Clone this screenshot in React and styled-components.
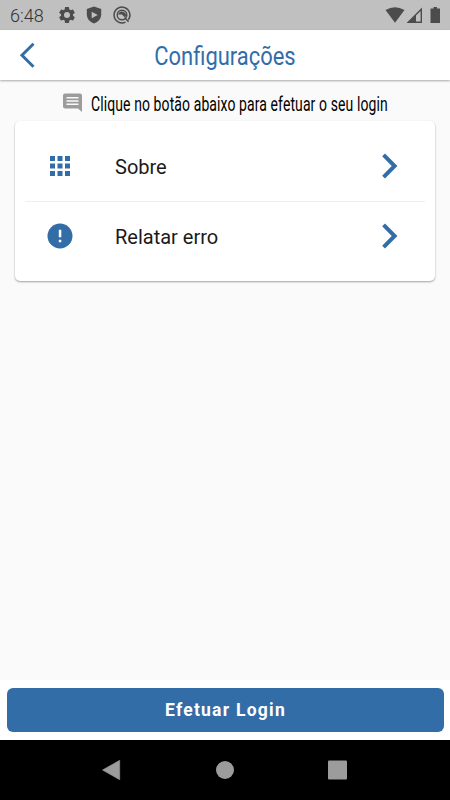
import React from 'react';
import styled, { createGlobalStyle } from 'styled-components';

const blue = '#336da8';

const GlobalStyle = createGlobalStyle`
  * { box-sizing: border-box; }
  body { margin: 0; background: #fafafa; font-family: Roboto, "Liberation Sans", sans-serif; }
  svg { display: block; flex: none; }
`;

const Screen = styled.div`
  width: 450px;
  height: 800px;
  display: flex;
  flex-direction: column;
  overflow: hidden;
  background: #fafafa;
`;

const StatusBar = styled.div`
  height: 30px;
  flex: none;
  display: flex;
  justify-content: space-between;
  padding: 0 9px 0 10px;
  background: #c0c0c0;
  color: #4c4c4c;
`;

const StatusGroup = styled.div`
  display: flex;
  align-items: center;
  gap: 8px;
`;

const Clock = styled.span`
  width: 39px;
  font-size: 18px;
  font-weight: 300;
  line-height: 30px;
  padding-top: 1px;
  color: #333;
`;

const Header = styled.header`
  height: 50px;
  flex: none;
  display: grid;
  grid-template-columns: 54px 1fr 54px;
  align-items: center;
  background: #fff;
  box-shadow: 0 1px 2px rgba(0, 0, 0, 0.32);
  z-index: 1;
`;

const BackButton = styled.button`
  width: 54px;
  height: 50px;
  padding: 0 0 0 19px;
  border: 0;
  background: none;
`;

const Title = styled.h1`
  margin: 0;
  padding-top: 4px;
  text-align: center;
  white-space: nowrap;
  font-size: 25px;
  line-height: 30px;
  font-weight: 400;
  color: ${blue};
  transform: scaleX(0.877);
`;

const Content = styled.main`
  flex: 1;
  padding: 0 15px;
`;

const Hint = styled.div`
  height: 41px;
  display: flex;
  align-items: center;
  padding: 5px 0 0 47px;
  gap: 8px;
`;

const HintText = styled.span`
  width: 298px;
  padding-top: 2px;
  white-space: nowrap;
  font-size: 20px;
  line-height: 24px;
  color: #000;
  letter-spacing: 0.16px;
  transform: scaleX(0.698);
  transform-origin: left center;
`;

const Card = styled.section`
  height: 160px;
  padding: 10px;
  border-radius: 5px;
  background: #fff;
  box-shadow: 0 1px 2px rgba(0, 0, 0, 0.36);
`;

const Row = styled.div`
  height: 70px;
  display: grid;
  grid-template-columns: 70px 1fr 70px;
  column-gap: 20px;
  align-items: center;
  justify-items: center;
  & + & {
    padding-bottom: 1px;
    border-top: 1px solid #eee;
  }
`;

const RowLabel = styled.span`
  justify-self: start;
  padding-top: 1px;
  font-size: 20px;
  line-height: 28px;
  color: #1a1a1a;
`;

const Footer = styled.footer`
  height: 60px;
  flex: none;
  padding: 8px 6.5px;
  background: #fff;
`;

const LoginButton = styled.button`
  width: 100%;
  height: 44px;
  border: 0;
  border-radius: 6px;
  background: ${blue};
  color: #fff;
  font: 700 17.5px/44px Roboto, sans-serif;
  letter-spacing: 1.25px;
  padding: 0 0 0 1px;
`;

const NavBar = styled.nav`
  height: 60px;
  flex: none;
  display: grid;
  grid-template-columns: repeat(3, 113px);
  justify-content: center;
  align-items: center;
  justify-items: center;
  background: #000;
`;

const Chevron = () => (
  <svg width="18" height="26" viewBox="0 0 18 26" fill="none" stroke={blue} strokeWidth="4">
    <path d="M2.6 1.8 13.6 13 2.6 24.2" />
  </svg>
);

export default function App() {
  return (
    <>
      <GlobalStyle />
      <Screen>
        <StatusBar>
          <StatusGroup>
            <Clock>6:48</Clock>
            <svg width="20" height="20" viewBox="0 0 24 24" fill="currentColor">
              <path d="M19.14 12.94c.04-.3.06-.61.06-.94s-.02-.64-.07-.94l2.03-1.58a.49.49 0 0 0 .12-.61l-1.92-3.32a.49.49 0 0 0-.59-.22l-2.39.96c-.5-.38-1.03-.7-1.62-.94l-.36-2.54a.48.48 0 0 0-.48-.41h-3.84a.47.47 0 0 0-.47.41l-.36 2.54c-.59.24-1.13.57-1.62.94l-2.39-.96a.48.48 0 0 0-.59.22L2.74 8.87a.47.47 0 0 0 .12.61l2.03 1.58c-.05.3-.09.63-.09.94s.02.64.07.94l-2.03 1.58a.49.49 0 0 0-.12.61l1.92 3.32c.12.22.37.29.59.22l2.39-.96c.5.38 1.03.7 1.62.94l.36 2.54c.05.24.24.41.48.41h3.84c.24 0 .44-.17.47-.41l.36-2.54c.59-.24 1.13-.56 1.62-.94l2.39.96c.22.08.47 0 .59-.22l1.92-3.32a.47.47 0 0 0-.12-.61zM12 15.6a3.6 3.6 0 1 1 0-7.2 3.6 3.6 0 0 1 0 7.2" />
            </svg>
            <svg width="19" height="20" viewBox="0 0 19 20">
              <path fill="currentColor" d="M9 1.5 16.2 4v5.2c0 4.5-2.9 7.5-7.2 9.3C4.7 16.7 1.8 13.7 1.8 9.2V4z" />
              <path fill="#c0c0c0" d="m6.7 6.7 6 3.3-6 3.3z" />
            </svg>
            <svg width="20" height="20" viewBox="0 0 20 20" fill="none" stroke="currentColor">
              <path d="M16.2 14.9A7.9 7.9 0 1 0 13.5 17.1" strokeWidth="1.5" />
              <path d="m12.8 12.8 3.8 4" strokeWidth="1.5" />
              <circle cx="10" cy="10" r="4.8" strokeWidth="1.4" />
              <path d="M6 9.5C7.500 5.500 12 5.300 14.200 9.700l-1.200 3-3-3.200z" fill="currentColor" stroke="none" />
            </svg>
          </StatusGroup>
          <StatusGroup>
            <svg width="56" height="20" viewBox="0 0 56 20" fill="currentColor">
              <path d="M.5 5Q10-.7 19.5 5L10 17.7z" />
              <path fillRule="evenodd" d="M37 2.5V18H21.5zM35.6 6 31 10.600v5.900h4.600zM29.400 12.200l-3.500 3.500h3.500z" />
              <path d="M25 16 30 11v6h-5z" />
              <path d="M48.5 2H52v1.500h3V18h-9.500V3.500h3z" />
            </svg>
          </StatusGroup>
        </StatusBar>
        <Header>
          <BackButton aria-label="Voltar">
            <svg width="18" height="26" viewBox="0 0 18 26" fill="none" stroke={blue} strokeWidth="3">
              <path d="M14.5 1.7 3 13.2 14.5 24.7" />
            </svg>
          </BackButton>
          <Title>Configurações</Title>
        </Header>
        <Content>
          <Hint>
            <svg width="21" height="20" viewBox="0 0 21 20">
              <path fill="#9c9c9c" d="M3 .5h15a2 2 0 0 1 2 2V19l-4-3.500H3a2 2 0 0 1-2-2v-11a2 2 0 0 1 2-2" />
              <path stroke="#fafafa" strokeWidth="1.6" d="M4.5 4.8h12M4.5 8h12M4.5 11.2h12" />
            </svg>
            <HintText>Clique no botão abaixo para efetuar o seu login</HintText>
          </Hint>
          <Card>
            <Row>
              <svg width="20" height="20" viewBox="0 0 20 20" fill={blue}>
                <path d="M0 0h5v5H0zM7.5 0h5v5h-5zM15 0h5v5h-5zM0 7.5h5v5H0zM7.5 7.5h5v5h-5zM15 7.5h5v5h-5zM0 15h5v5H0zM7.5 15h5v5h-5zM15 15h5v5h-5z" />
              </svg>
              <RowLabel>Sobre</RowLabel>
              <Chevron />
            </Row>
            <Row>
              <svg width="26" height="26" viewBox="0 0 26 26">
                <circle cx="13" cy="13" r="12.5" fill={blue} />
                <path fill="#fff" d="M11.8 6.8h2.5v7.5h-2.5zM11.8 16.8h2.5v2.5h-2.5z" />
              </svg>
              <RowLabel>Relatar erro</RowLabel>
              <Chevron />
            </Row>
          </Card>
        </Content>
        <Footer>
          <LoginButton>Efetuar Login</LoginButton>
        </Footer>
        <NavBar>
          <svg width="20" height="20" viewBox="0 0 20 20" fill="#9c9c9c"><path d="M17.7.3v19.4L.5 10z" stroke="#9c9c9c" strokeWidth=".6" strokeLinejoin="round" /></svg>
          <svg width="18" height="18" viewBox="0 0 18 18" fill="#9c9c9c"><circle cx="9" cy="9" r="9" /></svg>
          <svg width="20" height="20" viewBox="0 0 20 20" fill="#9c9c9c"><rect y=".5" width="19" height="19" rx="1" /></svg>
        </NavBar>
      </Screen>
    </>
  );
}
